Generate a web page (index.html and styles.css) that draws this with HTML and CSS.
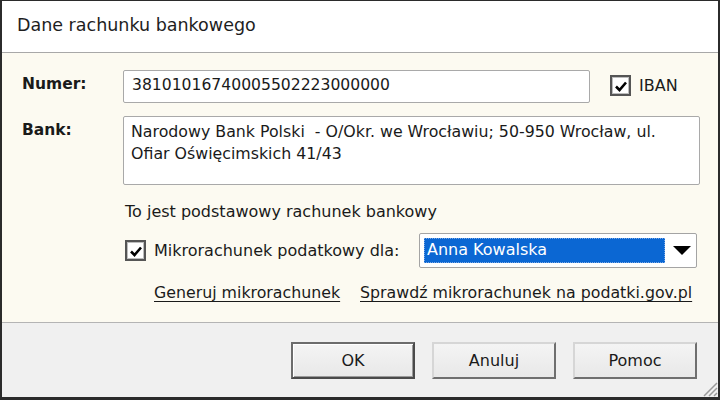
FILE: index.html
```html
<!DOCTYPE html>
<html lang="pl">
<head>
<meta charset="utf-8">
<link rel="stylesheet" href="styles.css">
</head>
<body>
<div class="window">
  <div class="titlebar">Dane rachunku bankowego</div>
  <div class="content">
    <div class="row row-numer">
      <div class="label">Numer:</div>
      <div class="input input-numer">38101016740005502223000000</div>
      <div class="check check-iban">
        <span class="box"><svg viewBox="0 0 14 14" width="14" height="14"><path d="M2 7.5 L5.5 11 L12 3.5" fill="none" stroke="#000" stroke-width="2.6"/></svg></span>
        <span>IBAN</span>
      </div>
    </div>
    <div class="row row-bank">
      <div class="label">Bank:</div>
      <div class="input textarea">Narodowy Bank Polski &nbsp;- O/Okr. we Wrocławiu; 50-950 Wrocław, ul.<br>Ofiar Oświęcimskich 41/43</div>
    </div>
    <div class="indent info">To jest podstawowy rachunek bankowy</div>
    <div class="indent row-micro">
      <div class="check check-micro">
        <span class="box"><svg viewBox="0 0 14 14" width="14" height="14"><path d="M2 7.5 L5.5 11 L12 3.5" fill="none" stroke="#000" stroke-width="2.6"/></svg></span>
        <span>Mikrorachunek podatkowy dla:</span>
      </div>
      <div class="combo">
        <span class="sel">Anna Kowalska</span>
        <svg class="arrow" viewBox="0 0 18 9" width="18" height="9"><path d="M0 0 H18 L9 9 Z" fill="#000"/></svg>
      </div>
    </div>
    <div class="links">
      <span class="link link-gen">Generuj mikrorachunek</span>
      <span class="link">Sprawdź mikrorachunek na podatki.gov.pl</span>
    </div>
  </div>
  <div class="footer">
    <div class="btn btn-default">OK</div>
    <div class="btn">Anuluj</div>
    <div class="btn">Pomoc</div>
    <svg class="grip" viewBox="0 0 18 18" width="18" height="18">
      <path d="M17 4 L4 17 M17 9 L9 17 M17 14 L14 17" stroke="#9a9a9a" stroke-width="1.5"/>
    </svg>
  </div>
</div>
</body>
</html>
```

FILE: styles.css
```css
* { box-sizing: border-box; }
html, body {
  margin: 0;
  padding: 0;
  width: 720px;
  height: 400px;
  overflow: hidden;
  background: #fff;
}
body {
  font-family: "DejaVu Sans", sans-serif;
  font-size: 16px;
  color: #1a1a1a;
}
.window {
  width: 720px;
  height: 400px;
  border: 2px solid #2b2b2b;
  border-top-width: 1px;
  border-bottom-width: 3px;
  display: flex;
  flex-direction: column;
  position: relative;
}
.titlebar {
  height: 52px;
  background: #fff;
  border-bottom: 1px solid #a8a8a8;
  padding: 14px 0 0 15px;
  font-size: 17.5px;
  color: #1e1e1e;
  white-space: nowrap;
}
.content {
  height: 270px;
  background: #fcfaf1;
  border-bottom: 1px solid #b4b4b4;
  padding: 17px 0 0 20px;
  white-space: nowrap;
}
.row { display: flex; align-items: flex-start; }
.label {
  width: 101px;
  font-weight: bold;
  padding-top: 5px;
  font-size: 15.5px;
}
.input {
  background: #fff;
  border: 1px solid #a9a9a9;
  border-radius: 2px;
}
.input-numer {
  width: 467px;
  height: 33px;
  padding: 5px 8px;
  font-size: 15.6px;
}
.check {
  display: flex;
  align-items: center;
  gap: 8px;
}
.check-iban { margin-left: 20px; margin-top: 5px; }
.box {
  width: 21px;
  height: 21px;
  border: 2px solid #555;
  background: #fff;
  display: flex;
  align-items: center;
  justify-content: center;
  box-shadow: inset 0 0 0 1px #bdbdbd;
  flex: none;
}
.row-bank { margin-top: 13px; }
.textarea {
  width: 577px;
  height: 69px;
  padding: 4px 7px;
  line-height: 22px;
  font-size: 15.8px;
}
.indent { margin-left: 103px; }
.info { margin-top: 17px; height: 21px; }
.row-micro {
  display: flex;
  align-items: center;
  margin-top: 10px;
}
.check-micro { width: 294px; }
.combo {
  width: 278px;
  height: 35px;
  border: 1px solid #a4a4a4;
  border-radius: 2px;
  background: #fff;
  padding: 4px;
  display: flex;
  align-items: center;
}
.sel {
  width: 241px;
  height: 25px;
  background: #0b67d3;
  color: #fff;
  padding: 1px 2px;
  font-size: 16px;
  border: 1px dotted #7aa8e6;
}
.arrow { margin-left: 8px; }
.links {
  margin-left: 132px;
  margin-top: 15px;
  display: flex;
  font-size: 15.8px;
}
.link { text-decoration: underline; text-underline-offset: 3px; }
.link-gen { width: 206px; }
.footer {
  flex: 1;
  background: #f0f0f0;
  display: flex;
  justify-content: flex-end;
  align-items: flex-start;
  gap: 17px;
  padding: 19px 21px 0 0;
  position: relative;
}
.btn {
  width: 124px;
  height: 37px;
  background: linear-gradient(#f4f4f4, #e8e8e8);
  border: 2px solid;
  border-color: #d6d6d6 #6f6f6f #6f6f6f #d6d6d6;
  display: flex;
  align-items: center;
  justify-content: center;
  font-size: 16px;
}
.btn-default {
  border-color: #6c6c6c #4a4a4a #4a4a4a #6c6c6c;
  box-shadow: inset 1px 1px 0 #fff, inset -1px -1px 0 #9a9a9a;
}
.grip {
  position: absolute;
  right: 0;
  bottom: 0;
}
```
